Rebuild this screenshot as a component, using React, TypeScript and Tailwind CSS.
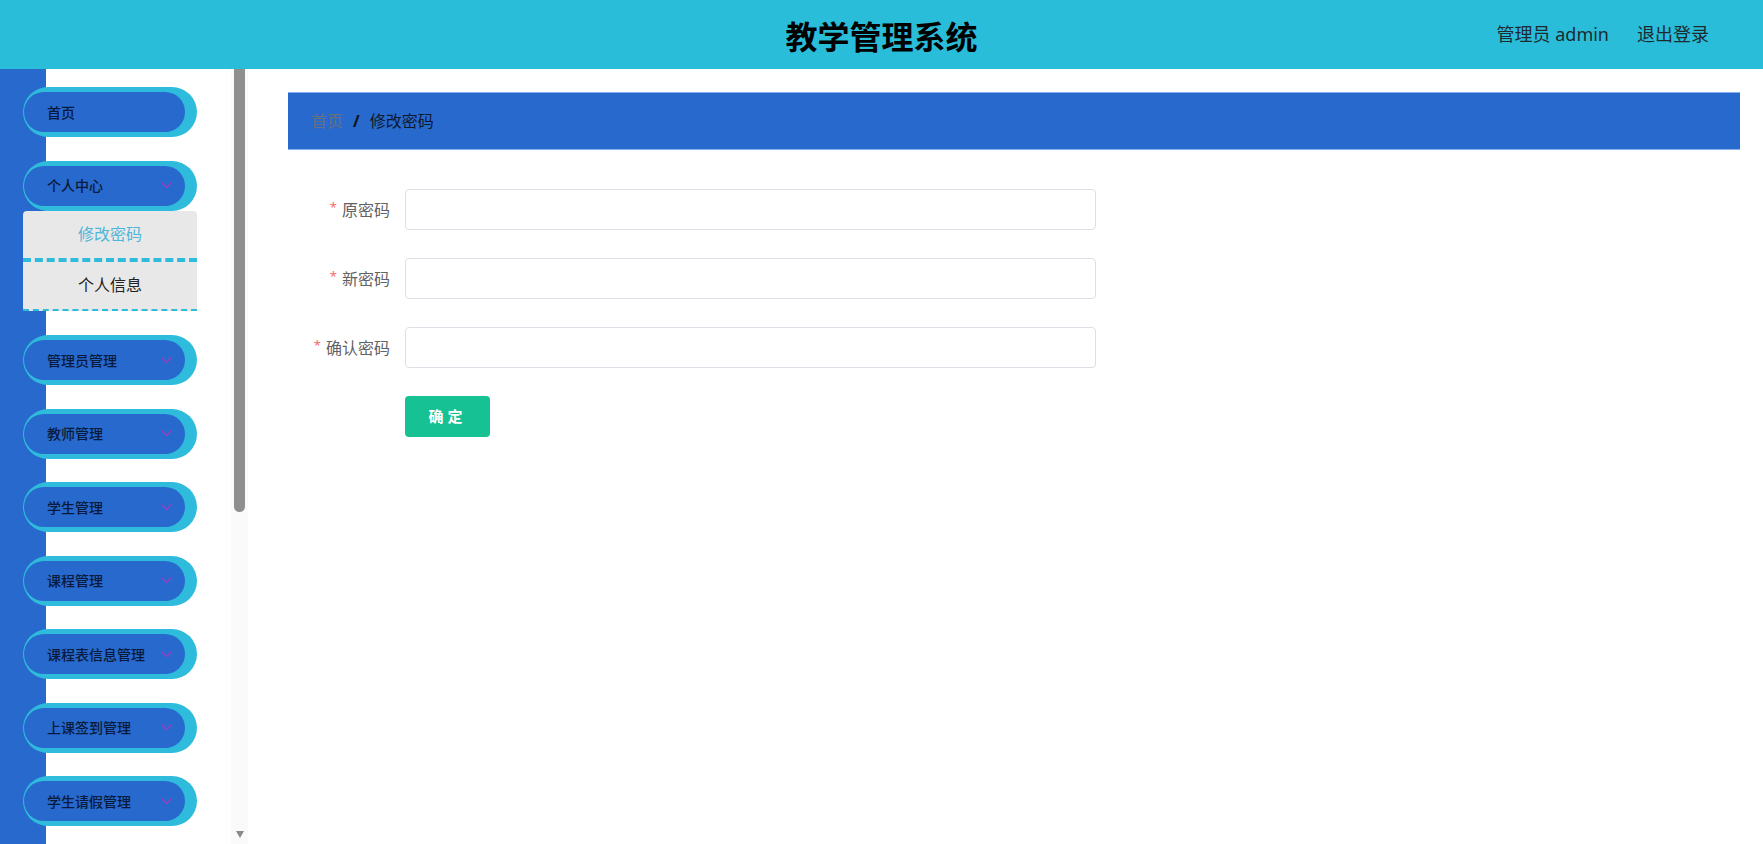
import React from "react";

const FONT = { fontFamily: '"Noto Sans", "Noto Sans CJK SC", sans-serif' };

function Chevron() {
  return (
    <svg width="11" height="7" viewBox="0 0 11 7" fill="none">
      <polyline points="1,1 5.5,5.5 10,1" stroke="#9b3fc4" strokeWidth="1.3" strokeLinecap="round" strokeLinejoin="round" />
    </svg>
  );
}

function Pill({ label, chevron = true }: { label: string; chevron?: boolean }) {
  return (
    <div className="h-[50px] w-[174px] rounded-full bg-[#2fbcdc] pt-[5px] pb-[5px] pl-[1px] pr-[12px]">
      <div className="flex h-full items-center justify-between rounded-full bg-[#2769cc] pl-[23px] pr-[13px]">
        <span className="text-[14px] font-medium text-[#0a1a3c]">{label}</span>
        {chevron && <Chevron />}
      </div>
    </div>
  );
}

const groups = [
  "管理员管理",
  "教师管理",
  "学生管理",
  "课程管理",
  "课程表信息管理",
  "上课签到管理",
  "学生请假管理",
];

function Field({ label }: { label: string }) {
  return (
    <div className="mb-[28px] flex items-center">
      <label className="w-[102px] text-right text-[16px] text-[#606266]">
        <span className="mr-[5px] align-top text-[13px] text-[#f56c6c]">*</span>
        {label}
      </label>
      <input
        type="password"
        className="ml-[15px] h-[41px] w-[691px] rounded-[4px] border border-[#dcdfe6] bg-white px-[15px] outline-none"
      />
    </div>
  );
}

export default function App() {
  return (
    <div className="flex h-screen w-full flex-col overflow-hidden bg-white" style={FONT}>
      <header className="grid h-[69px] shrink-0 grid-cols-[1fr_auto_1fr] items-center bg-[#29bdd9]">
        <div />
        <h1 className="pt-[5px] text-[32px] font-bold text-black">教学管理系统</h1>
        <div className="flex items-center justify-end gap-[28px] pr-[54px] text-[18px] text-[#1e2a30]">
          <span>管理员 admin</span>
          <span>退出登录</span>
        </div>
      </header>

      <div className="flex min-h-0 flex-1">
        <aside className="flex shrink-0">
          <nav className="w-[231px] overflow-hidden bg-[linear-gradient(to_right,#2769cc_46px,#ffffff_46px)] pl-[23px] pt-[18px]">
            <Pill label="首页" chevron={false} />
            <div className="mt-[23.5px]">
              <Pill label="个人中心" />
              <div className="w-[174px] overflow-hidden rounded-t-[4px] bg-[#e8e8e8]">
                <div className="flex h-[51px] items-center justify-center border-b-4 border-dashed border-[#2fbcdc] text-[16px] text-[#4fb6d8]">
                  修改密码
                </div>
                <div className="flex h-[49px] items-center justify-center border-b-2 border-dashed border-[#2fbcdc] text-[16px] text-[#222]">
                  个人信息
                </div>
              </div>
            </div>
            {groups.map((g, i) => (
              <div key={g} className={i === 0 ? "mt-[24.5px]" : "mt-[23.5px]"}>
                <Pill label={g} />
              </div>
            ))}
          </nav>
          <div className="flex w-[17px] flex-col items-center justify-between bg-[#fafafa]">
            <div className="h-[443px] w-[11px] rounded-b-[6px] bg-[#8f8f8f]" />
            <svg className="mb-[6px]" width="8" height="7" viewBox="0 0 8 7">
              <polygon points="0,0 8,0 4,7" fill="#8a8a8a" />
            </svg>
          </div>
        </aside>

        <main className="flex-1 pl-[40px] pr-[23px] pt-[23px]">
          <div className="flex h-[58px] items-center border-y border-[#86aef0] bg-[#2769cc] pl-[23px] text-[16px]">
            <span className="text-[#66707e]">首页</span>
            <span className="mx-[10px] font-bold text-[#111]">/</span>
            <span className="text-[#0f1a30]">修改密码</span>
          </div>

          <form className="mt-[39px]" onSubmit={(e) => e.preventDefault()}>
            <Field label="原密码" />
            <Field label="新密码" />
            <Field label="确认密码" />
            <div className="ml-[117px]">
              <button
                type="submit"
                className="h-[41px] w-[85px] rounded-[4px] bg-[#16c293] text-[15px] font-bold tracking-[4px] text-white"
              >
                确定
              </button>
            </div>
          </form>
        </main>
      </div>
    </div>
  );
}
